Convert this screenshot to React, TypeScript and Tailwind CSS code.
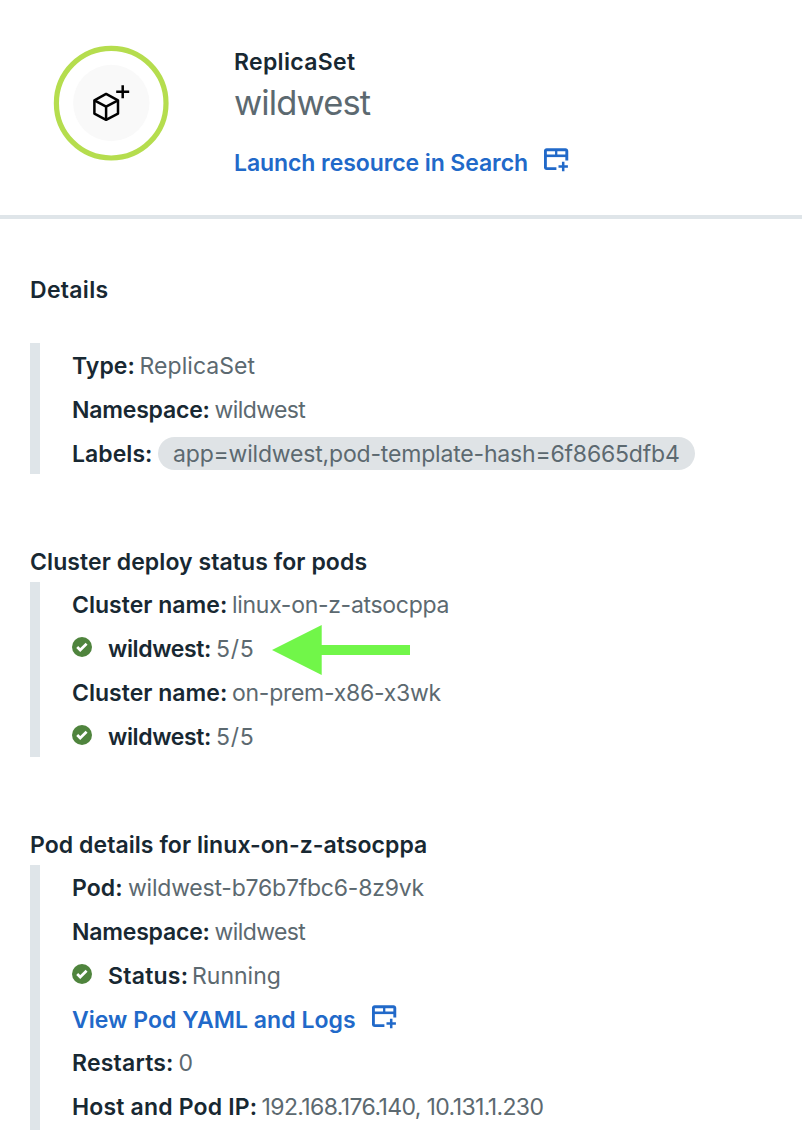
import type { ReactNode } from "react";

function ReplicaSetBadge() {
  return (
    <svg className="block" width="116" height="116" viewBox="0 0 116 116" fill="none">
      <circle cx="58.2" cy="58.2" r="54.8" stroke="#b5dd4e" strokeWidth="5.2" />
      <circle cx="58.3" cy="58" r="38.2" fill="#f9f9f9" />
      <g stroke="#000" strokeWidth="2.5" strokeLinejoin="round">
        <path d="M53.1 48.9 65 55.3V68.6L53.1 74.8 41.4 68.6V55.3Z" />
        <path d="M41.4 55.3 53.1 61.7 65 55.3M53.1 61.7V74.8" />
      </g>
      <path d="M69.7 40.2V53.2M63.2 46.7H76.2" stroke="#000" strokeWidth="2.5" />
    </svg>
  );
}

function LaunchIcon({ className }: { className: string }) {
  return (
    <svg className={className} width="25" height="24" viewBox="0 0 25 24" fill="none" stroke="#2169c9">
      <path d="M22.8 12.4V3A1.3 1.3 0 0 0 21.5 1.7H2.7A1.3 1.3 0 0 0 1.4 3V19.3A1.3 1.3 0 0 0 2.7 20.6H12.4" strokeWidth="2.9" />
      <path d="M1.4 7.8H22.8" strokeWidth="2.6" />
      <path d="M12.2 2V8" strokeWidth="2.3" />
      <path d="M19.2 13.8V23.2M14.5 18.5H23.9" strokeWidth="2.5" />
    </svg>
  );
}

function CheckIcon() {
  return (
    <svg className="mr-4 block shrink-0 -translate-y-[2px]" width="20" height="20" viewBox="0 0 20 20" fill="none">
      <circle cx="10" cy="10" r="10" fill="#4f843d" />
      <path d="m5.2 10 3 3 6.4-6.3" stroke="#fff" strokeWidth="2.7" />
    </svg>
  );
}

function Row({ children }: { children: ReactNode }) {
  return <div className="flex h-[43.8px] items-center whitespace-nowrap pt-[3px]">{children}</div>;
}

function Label({ className, children }: { className: string; children: ReactNode }) {
  return <span className={`shrink-0 font-semibold text-[#182832] ${className}`}>{children}</span>;
}

function Value({ className = "", children }: { className?: string; children: ReactNode }) {
  return <span className={className}>{children}</span>;
}

function Block({ children }: { children: ReactNode }) {
  return <div className="border-l-[10px] border-[#dfe5e9] pl-8">{children}</div>;
}

export default function App() {
  return (
    <div className="h-[1130px] w-[802px] overflow-hidden bg-white font-['Inter',sans-serif] text-[23px] leading-7 text-[#5c6970]">
      <header className="flex h-[219px] border-b-4 border-[#dfe5e9] pl-[53px] pt-[45px]">
        <ReplicaSetBadge />
        <div className="ml-[65px] whitespace-nowrap">
          <div className="mt-[3px] font-semibold tracking-[0.32px] text-[#182832]">ReplicaSet</div>
          <div className="mt-1 text-[34.5px] leading-[46px] tracking-[-0.9px]">wildwest</div>
          <a className="mt-[23px] flex font-semibold tracking-[-0.08px] text-[#2169c9]">
            Launch resource in Search
            <LaunchIcon className="ml-4 -mt-[1px]" />
          </a>
        </div>
      </header>

      <main className="pl-[30px]">
        <h2 className="pt-[57px] font-semibold tracking-[0.3px] text-[#182832]">Details</h2>
        <div className="mt-[39px]">
          <Block>
            <Row>
              <Label className="w-[67.5px] tracking-[0.05px]">Type:</Label>
              <Value className="tracking-[0.06px]">ReplicaSet</Value>
            </Row>
            <Row>
              <Label className="w-[142.5px] tracking-[-0.2px]">Namespace:</Label>
              <Value className="tracking-[-0.6px]">wildwest</Value>
            </Row>
            <Row>
              <Label className="w-[86px] tracking-[0.05px]">Labels:</Label>
              <span className="flex h-[33px] w-[537px] items-center rounded-full bg-[#dfe3e6] pl-[15px] tracking-[-0.185px]">
                app=wildwest,pod-template-hash=6f8665dfb4
              </span>
            </Row>
          </Block>
        </div>

        <h2 className="mt-[73.6px] font-semibold tracking-[0.08px] text-[#182832]">Cluster deploy status for pods</h2>
        <div className="mt-[5.8px]">
          <Block>
            <Row>
              <Label className="w-[160px] tracking-[0.02px]">Cluster name:</Label>
              <Value className="tracking-[-0.3px]">linux-on-z-atsocppa</Value>
            </Row>
            <Row>
              <CheckIcon />
              <Label className="w-[108px] tracking-[-0.37px]">wildwest:</Label>
              <Value className="tracking-[0.7px]">5/5</Value>
              <svg className="ml-[17.7px] block translate-y-[1px]" width="138" height="50" viewBox="0 0 138 50">
                <path d="M0 25 49.7 0V20H138V30H49.7V50Z" fill="#71f649" />
              </svg>
            </Row>
            <Row>
              <Label className="w-[160px] tracking-[0.02px]">Cluster name:</Label>
              <Value className="tracking-[-0.27px]">on-prem-x86-x3wk</Value>
            </Row>
            <Row>
              <CheckIcon />
              <Label className="w-[108px] tracking-[-0.37px]">wildwest:</Label>
              <Value className="tracking-[0.7px]">5/5</Value>
            </Row>
          </Block>
        </div>

        <h2 className="mt-[73.8px] font-semibold tracking-[0.06px] text-[#182832]">Pod details for linux-on-z-atsocppa</h2>
        <div className="mt-[6px]">
          <Block>
            <Row>
              <Label className="w-[56px] tracking-[0.1px]">Pod:</Label>
              <Value className="tracking-[-0.22px]">wildwest-b76b7fbc6-8z9vk</Value>
            </Row>
            <Row>
              <Label className="w-[142.5px] tracking-[-0.2px]">Namespace:</Label>
              <Value className="tracking-[-0.6px]">wildwest</Value>
            </Row>
            <Row>
              <CheckIcon />
              <Label className="w-[84px] tracking-[0.25px]">Status:</Label>
              <Value>Running</Value>
            </Row>
            <Row>
              <a className="flex font-semibold tracking-[0.04px] text-[#2169c9]">
                View Pod YAML and Logs
                <LaunchIcon className="ml-4 -mt-[1px]" />
              </a>
            </Row>
            <Row>
              <Label className="w-[106.5px] tracking-[0.2px]">Restarts:</Label>
              <Value>0</Value>
            </Row>
            <Row>
              <Label className="w-[189.5px] tracking-[0.17px]">Host and Pod IP:</Label>
              <Value className="tracking-[-0.62px]">192.168.176.140, 10.131.1.230</Value>
            </Row>
            <div className="h-4" />
          </Block>
        </div>
      </main>
    </div>
  );
}
